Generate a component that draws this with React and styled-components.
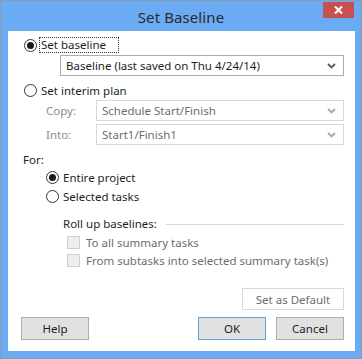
import React from "react";
import styled, { createGlobalStyle } from "styled-components";

const Global = createGlobalStyle`
  html, body { margin: 0; padding: 0; background: #ffffff; }
  body { font-family: "Noto Sans", "Open Sans", sans-serif; }
  * { box-sizing: border-box; }
`;

const Window = styled.div`
  width: 362px;
  height: 359px;
  background: #6aabf4;
  border: 1px solid #8c9bb0;
  display: flex;
  flex-direction: column;
`;

const TitleBar = styled.div`
  height: 30px;
  display: grid;
  grid-template-columns: 1fr auto 1fr;
  align-items: center;
`;

const Title = styled.div`
  grid-column: 2;
  font-size: 15px;
  color: #2b2b2b;
  letter-spacing: 0.1px;
  padding-top: 1px;
`;

const CloseButton = styled.div`
  grid-column: 3;
  justify-self: end;
  align-self: start;
  margin-top: 1px;
  margin-right: 7px;
  width: 31px;
  height: 16px;
  background: #c75050;
  display: flex;
  align-items: center;
  justify-content: center;
`;

const Client = styled.div`
  flex: 1;
  margin: 0 6px 7px 7px;
  background: #ffffff;
  display: flex;
  flex-direction: column;
  padding: 0 11px 0 0;
  font-size: 11.5px;
  color: #1e1e1e;
`;

const Row = styled.div`
  display: flex;
  align-items: center;
  height: ${(p) => p.h || 18}px;
  margin-top: ${(p) => p.mt || 0}px;
  padding-left: ${(p) => p.indent || 0}px;
`;

const RadioCircle = styled.span`
  width: 13px;
  height: 13px;
  border-radius: 50%;
  border: 1px solid #333333;
  background: #ffffff;
  display: inline-flex;
  align-items: center;
  justify-content: center;
  flex: none;
  margin-right: ${(p) => p.mr ?? 4}px;
  &::after {
    content: "";
    width: 7px;
    height: 7px;
    border-radius: 50%;
    background: #1a1a1a;
    display: ${(p) => (p.checked ? "block" : "none")};
  }
`;

const FocusLabel = styled.span`
  border: 1px dotted #333333;
  padding: 0 12px 1px 1px;
  height: 16px;
  display: inline-flex;
  align-items: center;
`;

const Label = styled.span`
  color: ${(p) => (p.disabled ? "#6d6d6d" : "#1e1e1e")};
`;

const FieldLabel = styled.span`
  width: 50px;
  flex: none;
  color: #8d8d8d;
`;

const Select = styled.div`
  flex: 1;
  height: 21px;
  border: 1px solid ${(p) => (p.disabled ? "#d9d9d9" : "#acacac")};
  background: #ffffff;
  display: flex;
  align-items: center;
  padding: 0 7px 0 5px;
  color: ${(p) => (p.disabled ? "#6d6d6d" : "#1e1e1e")};
`;

const SelectText = styled.span`
  flex: 1;
`;

const Chevron = ({ color }) => (
  <svg width="9" height="6" viewBox="0 0 9 6">
    <polyline points="1,1 4.5,4.5 8,1" fill="none" stroke={color} strokeWidth="1.8" />
  </svg>
);

const Rule = styled.div`
  flex: 1;
  height: 1px;
  background: #d5d5d5;
  margin-left: 9px;
  margin-top: 2px;
`;

const CheckBox = styled.span`
  width: 13px;
  height: 13px;
  border: 1px solid #d0d0d0;
  background: #eeeeee;
  flex: none;
  margin-right: 6px;
`;

const ButtonRow = styled.div`
  display: flex;
  align-items: center;
  margin-top: ${(p) => p.mt || 0}px;
  padding-left: ${(p) => p.indent || 0}px;
  justify-content: ${(p) => p.justify || "flex-start"};
  gap: 10px;
`;

const Button = styled.div`
  width: ${(p) => p.w || 68}px;
  height: ${(p) => p.h || 23}px;
  display: flex;
  align-items: center;
  justify-content: center;
  font-size: 11.5px;
  background: ${(p) => (p.disabled ? "#ffffff" : "#e1e1e1")};
  border: 1px solid
    ${(p) => (p.primary ? "#5fa0e2" : p.disabled ? "#d9d9d9" : "#adadad")};
  color: ${(p) => (p.disabled ? "#6d6d6d" : "#1e1e1e")};
`;

const Spacer = styled.div`
  flex: 1;
`;

export default function App() {
  return (
    <>
      <Global />
      <Window>
        <TitleBar>
          <Title>Set Baseline</Title>
          <CloseButton>
            <svg width="9" height="8" viewBox="0 0 9 8">
              <path d="M1 0.5 L8 7.5 M8 0.5 L1 7.5" stroke="#ffffff" strokeWidth="2" />
            </svg>
          </CloseButton>
        </TitleBar>
        <Client>
          <Row mt={5} indent={16}>
            <RadioCircle checked mr={2} />
            <FocusLabel>Set baseline</FocusLabel>
          </Row>
          <Row mt={1} h={21} indent={52}>
            <Select>
              <SelectText>Baseline (last saved on Thu 4/24/14)</SelectText>
              <Chevron color="#5a5a5a" />
            </Select>
          </Row>
          <Row mt={5} indent={16}>
            <RadioCircle />
            <Label>Set interim plan</Label>
          </Row>
          <Row mt={1} h={21} indent={38}>
            <FieldLabel>Copy:</FieldLabel>
            <Select disabled>
              <SelectText>Schedule Start/Finish</SelectText>
              <Chevron color="#a8a8a8" />
            </Select>
          </Row>
          <Row mt={3} h={21} indent={38}>
            <FieldLabel>Into:</FieldLabel>
            <Select disabled>
              <SelectText>Start1/Finish1</SelectText>
              <Chevron color="#a8a8a8" />
            </Select>
          </Row>
          <Row mt={5} indent={15}>
            <Label>For:</Label>
          </Row>
          <Row indent={38}>
            <RadioCircle checked />
            <Label>Entire project</Label>
          </Row>
          <Row mt={1} indent={38}>
            <RadioCircle />
            <Label>Selected tasks</Label>
          </Row>
          <Row mt={9} indent={55}>
            <Label>Roll up baselines:</Label>
            <Rule />
          </Row>
          <Row mt={1} indent={59}>
            <CheckBox />
            <Label disabled>To all summary tasks</Label>
          </Row>
          <Row indent={59}>
            <CheckBox />
            <Label disabled>From subtasks into selected summary task(s)</Label>
          </Row>
          <ButtonRow mt={19} justify="flex-end">
            <Button disabled w={102} h={22}>
              Set as Default
            </Button>
          </ButtonRow>
          <ButtonRow mt={7} indent={13}>
            <Button>Help</Button>
            <Spacer />
            <Button primary>OK</Button>
            <Button>Cancel</Button>
          </ButtonRow>
        </Client>
      </Window>
    </>
  );
}
